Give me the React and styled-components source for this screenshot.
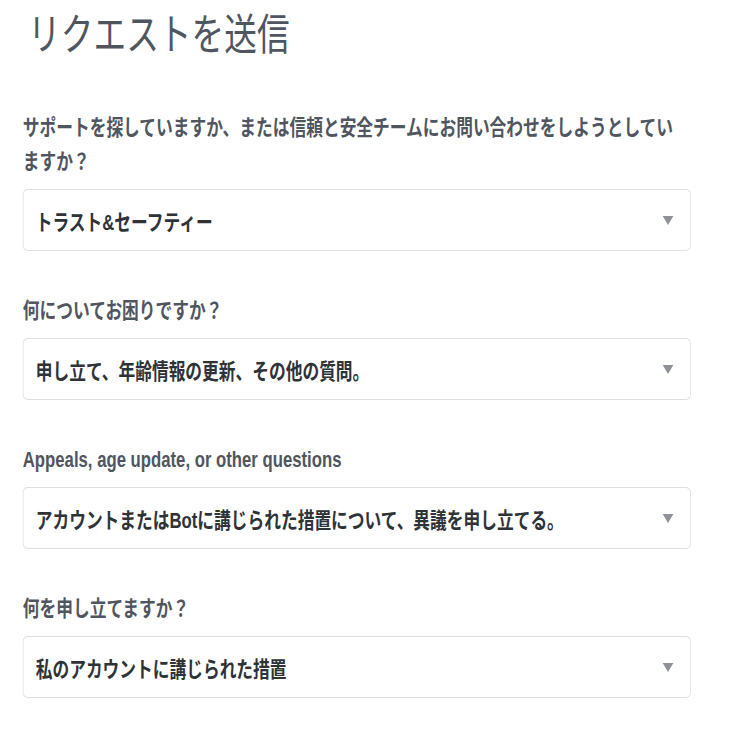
import React from "react";
import styled, { createGlobalStyle } from "styled-components";

// the reference is rendered horizontally squeezed, so the page is laid out
// wider and compressed back into the 732px window
const SQUEEZE = 0.76;

const GlobalStyle = createGlobalStyle`
  html, body {
    margin: 0;
    padding: 0;
    background: #ffffff;
    overflow: hidden;
  }
  body {
    font-family: "Liberation Sans", "Noto Sans CJK JP", sans-serif;
  }
`;

const fields = [
  {
    label:
      "サポートを探していますか、または信頼と安全チームにお問い合わせをしようとしていますか？",
    value: "トラスト&セーフティー",
  },
  {
    label: "何についてお困りですか？",
    value: "申し立て、年齢情報の更新、その他の質問。",
  },
  {
    label: "Appeals, age update, or other questions",
    value: "アカウントまたはBotに講じられた措置について、異議を申し立てる。",
  },
  {
    label: "何を申し立てますか？",
    value: "私のアカウントに講じられた措置",
  },
];

export default function App() {
  return (
    <>
      <GlobalStyle />
      <Page>
        <Title>リクエストを送信</Title>
        {fields.map((field) => (
          <Field key={field.label}>
            <Label>{field.label}</Label>
            <Select>
              <SelectValue>{field.value}</SelectValue>
              <Arrow />
            </Select>
          </Field>
        ))}
      </Page>
    </>
  );
}

const Page = styled.div`
  width: ${Math.round(732 / SQUEEZE)}px;
  padding: 9px 0 0 30px;
  box-sizing: border-box;

  display: flex;
  flex-direction: column;

  transform: scaleX(${SQUEEZE});
  transform-origin: 0 0;
`;

const Title = styled.h1`
  margin: 0 0 0 7px;
  font-size: 43px;
  line-height: 53px;
  font-weight: 400;
  color: #4f5660;
`;

const Field = styled.div`
  width: 879px;
  margin-top: 43px;

  display: flex;
  flex-direction: column;
  gap: 10px;

  &:first-of-type {
    margin-top: 49px;
  }
`;

const Label = styled.div`
  max-width: 868px;
  font-size: 22px;
  line-height: 34px;
  font-weight: 700;
  color: #4f5660;
`;

const Select = styled.div`
  height: 62px;
  padding: 0 22px 0 16px;
  box-sizing: border-box;

  display: flex;
  align-items: center;
  justify-content: space-between;

  border: 1px solid #dedfe0;
  border-radius: 7px / 5px;
  background: #ffffff;
`;

const SelectValue = styled.span`
  font-size: 22px;
  font-weight: 700;
  color: #2e3338;
  white-space: nowrap;
`;

const Arrow = styled.span`
  width: 0;
  height: 0;
  border-left: 7px solid transparent;
  border-right: 7px solid transparent;
  border-top: 9px solid #8e9297;
`;
